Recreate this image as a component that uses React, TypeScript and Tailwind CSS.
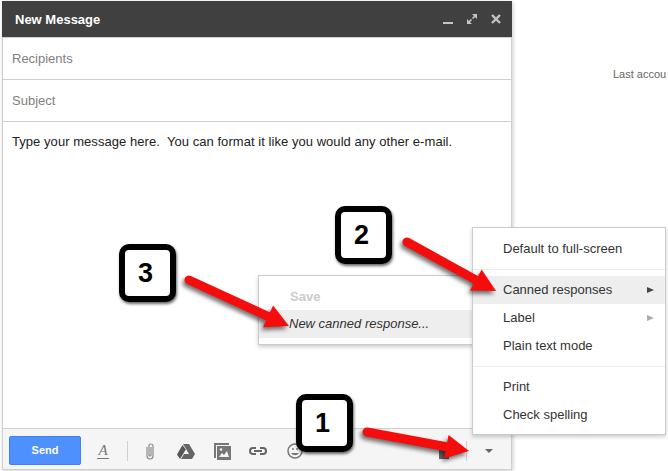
import React from 'react';

const Arrow: React.FC<{ x1: number; y1: number; x2: number; y2: number }> = ({ x1, y1, x2, y2 }) => {
  // thick shaft with a rounded tail, then a barbed head at the tip
  const len = Math.hypot(x2 - x1, y2 - y1);
  const ux = (x2 - x1) / len;
  const uy = (y2 - y1) / len;
  const nx = -uy;
  const ny = ux;
  const hx = x2 - ux * 23;
  const hy = y2 - uy * 23;
  const head = `${x2},${y2} ${hx + nx * 12},${hy + ny * 12} ${hx - nx * 12},${hy - ny * 12}`;
  return (
    <g className="drop-shadow-[-2px_3px_2px_rgba(0,0,0,0.55)]">
      <line x1={x1} y1={y1} x2={hx + ux * 4} y2={hy + uy * 4} stroke="#f50d0d" strokeWidth="9" strokeLinecap="round" />
      <polygon points={head} fill="#f50d0d" />
    </g>
  );
};

const Callout: React.FC<{ n: string; className: string }> = ({ n, className }) => (
  <div className={`absolute w-[57px] h-[58px] pr-[4px] bg-white border-[6px] border-black rounded-[10px] shadow-[1px_2px_3px_rgba(0,0,0,0.6)] flex items-center justify-center text-[27px] font-bold text-black ${className}`}>
    {n}
  </div>
);

const MenuItem: React.FC<{ label: string; active?: boolean; arrow?: 'dark' | 'light' }> = ({ label, active, arrow }) => (
  <div className={`h-[28px] pl-[30px] pr-[11px] flex items-center justify-between text-[13px] text-[#333] ${active ? 'bg-[#eeeeee]' : ''}`}>
    <span>{label}</span>
    {arrow && (
      <span className={`w-0 h-0 border-y-[3px] border-y-transparent border-l-[7px] ${arrow === 'dark' ? 'border-l-[#444]' : 'border-l-[#aaa]'}`} />
    )}
  </div>
);

const ToolIcon: React.FC<{ className: string; children: React.ReactNode }> = ({ className, children }) => (
  <svg viewBox="0 0 20 20" className={`w-[20px] h-[20px] shrink-0 ${className}`}>{children}</svg>
);

export default function App() {
  return (
    <div className="relative w-[668px] h-[471px] bg-white overflow-hidden font-['Liberation_Sans',Arial,sans-serif]">
      <div className="ml-[2px] mt-[1px] w-[510px] h-[469px] flex flex-col bg-white border-l border-r border-b border-[#cfcfcf] shadow-[1px_1px_4px_rgba(0,0,0,0.2)]">
        <div className="-mx-px h-[36px] shrink-0 bg-[#404040] flex items-center pl-[13px] pr-[10px]">
          <span className="pt-[2px] text-[13px] font-bold text-white flex-1">New Message</span>
          <svg viewBox="0 0 60 16" className="w-[60px] h-[16px] ml-auto">
            <rect x="1" y="11" width="10" height="2" fill="#c4c4c4" />
            <path d="M35 3h-5l5 5zM25 13v-5l5 5z" fill="#c4c4c4" />
            <path d="M33 5l-2.500 2.500M27 11l2.500-2.500" stroke="#c4c4c4" strokeWidth="1.600" />
            <path d="M50 4l8 8M58 4l-8 8" stroke="#c4c4c4" strokeWidth="2.400" />
          </svg>
        </div>
        <div className="h-[43px] shrink-0 border-b border-t border-[#cfcfcf] flex items-center pl-[9px] text-[13px] text-[#808080]">Recipients</div>
        <div className="h-[42px] shrink-0 border-b border-[#cfcfcf] flex items-center pl-[9px] text-[13px] text-[#808080]">Subject</div>
        <div className="flex-1 pt-[12px] pl-[9px] text-[13px] leading-[16px] tracking-[0.05px] text-[#222] whitespace-pre">Type your message here.  You can format it like you would any other e-mail.</div>
        <div className="h-[41px] shrink-0 bg-[#f5f5f5] border-t border-[#cfcfcf] flex items-center pt-[3px] pl-[6px] pr-[18px]">
          <div className="w-[72px] h-[29px] rounded-[2px] bg-[#4d90fe] border border-[#3f80ef] flex items-center justify-center text-[11px] font-bold text-white">Send</div>
          <span className="ml-[16px] w-[12px] text-center font-['Liberation_Serif',serif] italic text-[15px] leading-[15px] text-[#777] border-b border-[#777]">A</span>
          <div className="ml-[18px] w-px h-[20px] bg-[#d0d0d0]" />
          <ToolIcon className="ml-[12px]">
            <path d="M7 6v9a3 3 0 0 0 6 0V5a2 2 0 0 0-4 0v9a1 1 0 0 0 2 0V6" fill="none" stroke="#8a8a8a" strokeWidth="1.200" />
          </ToolIcon>
          <ToolIcon className="ml-[16px]">
            <path d="M7 3h6l6 10h-6z" fill="#666" />
            <path d="M6.500 4L1 13.500l3 4.500 5.800-9.500z" fill="#555" />
            <path d="M8 13h11l-3 5H5z" fill="#666" />
          </ToolIcon>
          <ToolIcon className="ml-[16px]">
            <path d="M2 2h15v2H4v13H2z" fill="#777" />
            <rect x="5" y="5" width="14" height="14" fill="#777" />
            <path d="M7 16l3-4 2 2 3-4 2 6z" fill="#f5f5f5" />
            <circle cx="9" cy="8.500" r="1.300" fill="#f5f5f5" />
          </ToolIcon>
          <ToolIcon className="ml-[16px]">
            <path d="M8 7H5a3 3 0 0 0 0 6h3M12 7h3a3 3 0 0 1 0 6h-3M6 10h8" fill="none" stroke="#666" strokeWidth="2" />
          </ToolIcon>
          <ToolIcon className="ml-[17px]">
            <circle cx="10" cy="10" r="7" fill="none" stroke="#777" strokeWidth="1.500" />
            <path d="M6 12c2 3 6 3 8 0z" fill="#777" />
            <circle cx="8" cy="8" r="1" fill="#777" />
            <circle cx="12" cy="8" r="1" fill="#777" />
          </ToolIcon>
          <div className="ml-auto w-[10px] h-[10px] mt-[7px] bg-[#666]" />
          <div className="ml-[17px] w-px h-[20px] bg-[#d0d0d0]" />
          <span className="ml-[18px] w-0 h-0 border-x-[4px] border-x-transparent border-t-[4px] border-t-[#666]" />
        </div>
      </div>

      <div className="absolute left-[613px] top-[68px] text-[11px] leading-[12px] text-[#666] whitespace-nowrap">Last accou</div>

      <div className="absolute left-[258px] top-[275px] w-[216px] h-[70px] bg-white border border-[#cccccc] shadow-[0_2px_4px_rgba(0,0,0,0.2)] pt-[6px]">
        <div className="h-[28px] pl-[31px] pt-[2px] flex items-center text-[13px] font-bold text-[#cccccc]">Save</div>
        <div className="h-[28px] pl-[30px] flex items-center text-[13px] italic text-[#333] bg-[#eeeeee]">New canned response...</div>
      </div>

      <div className="absolute left-[472px] top-[227px] w-[194px] h-[208px] bg-white border border-[#cccccc] shadow-[0_2px_4px_rgba(0,0,0,0.2)] pt-[7px]">
        <MenuItem label="Default to full-screen" />
        <div className="h-px my-[6px] bg-[#ebebeb]" />
        <MenuItem label="Canned responses" active arrow="dark" />
        <MenuItem label="Label" arrow="light" />
        <MenuItem label="Plain text mode" />
        <div className="h-px my-[6px] bg-[#ebebeb]" />
        <MenuItem label="Print" />
        <MenuItem label="Check spelling" />
      </div>

      <svg viewBox="0 0 668 471" className="absolute inset-0 w-[668px] h-[471px] pointer-events-none">
        <Arrow x1={407} y1={242} x2={496} y2={291} />
        <Arrow x1={189} y1={280} x2={289} y2={326} />
        <Arrow x1={367} y1={432} x2={469} y2={451} />
      </svg>

      <Callout n="2" className="left-[335px] top-[206px]" />
      <Callout n="3" className="left-[119px] top-[244px]" />
      <Callout n="1" className="left-[296px] top-[394px]" />
    </div>
  );
}
